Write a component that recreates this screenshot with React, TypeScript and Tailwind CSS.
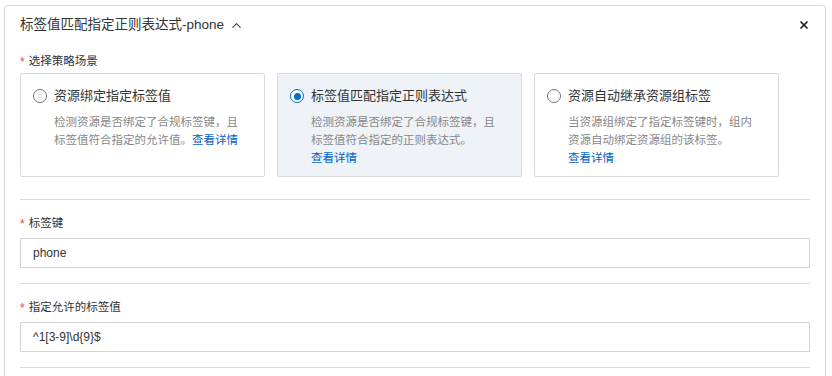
import { ChevronUp, X } from 'lucide-react';

const scenes = [
    {
        title: '资源绑定指定标签值',
        desc: '检测资源是否绑定了合规标签键，且标签值符合指定的允许值。',
        inline: true,
        selected: false,
    },
    {
        title: '标签值匹配指定正则表达式',
        desc: '检测资源是否绑定了合规标签键，且标签值符合指定的正则表达式。',
        inline: false,
        selected: true,
    },
    {
        title: '资源自动继承资源组标签',
        desc: '当资源组绑定了指定标签键时，组内资源自动绑定资源组的该标签。',
        inline: false,
        selected: false,
    },
];

function Label({ text }: { text: string }) {
    return (
        <div className="flex items-center h-4 text-[11.5px] text-[#333]">
            <span className="text-[#e5484d] mr-[4px] text-[12px]">*</span>
            {text}
        </div>
    );
}

export default function App() {
    return (
        <div className="w-[832px] h-[376px] bg-white overflow-hidden pt-[5px] pl-[4px] font-['Liberation_Sans','Noto_Sans_CJK_SC',sans-serif]">
            <div className="w-[822px] h-[400px] border border-[#d6d6d6] rounded-t-[4px] pl-[15px] pr-[15px]">
                {/* Header */}
                <div className="flex items-center justify-between h-[36px] pt-[2px]">
                    <div className="flex items-center gap-[5px] text-[13.5px] text-[#333]">
                        标签值匹配指定正则表达式-phone
                        <ChevronUp className="w-[15px] h-[15px] text-[#444]" strokeWidth={1.8} />
                    </div>
                    <X className="w-[12px] h-[12px] text-[#222]" strokeWidth={3.5} />
                </div>

                {/* Scene selection */}
                <div className="mt-[12px]">
                    <Label text="选择策略场景" />
                    <div className="flex gap-[12px] mt-[3px]">
                        {scenes.map((s) => (
                            <div
                                key={s.title}
                                className={`w-[245px] h-[104px] border rounded-[2px] pl-[12px] pr-[10px] pt-[12px] flex gap-[7px] ${
                                    s.selected ? 'bg-[#eff2f7] border-[#d6dae0]' : 'bg-white border-[#d9d9d9]'
                                }`}
                            >
                                <div className="pt-[3px]">
                                    {s.selected ? (
                                        <div className="w-[14px] h-[14px] rounded-full border-[1.5px] border-[#0070cc] flex items-center justify-center bg-white">
                                            <div className="w-[7px] h-[7px] rounded-full bg-[#0070cc]" />
                                        </div>
                                    ) : (
                                        <div className="w-[14px] h-[14px] rounded-full border-[1.5px] border-[#6b7380] bg-white" />
                                    )}
                                </div>
                                <div>
                                    <div className="text-[13px] text-[#333] leading-[20px]">{s.title}</div>
                                    <div className="text-[11.5px] text-[#888] leading-[18px] mt-[7px] w-[186px]">
                                        {s.desc}
                                        {s.inline && <span className="text-[#0064c8]">查看详情</span>}
                                    </div>
                                    {!s.inline && <div className="text-[11.5px] text-[#0064c8] leading-[18px]">查看详情</div>}
                                </div>
                            </div>
                        ))}
                    </div>
                </div>

                <div className="border-t border-[#d9d9d9] mt-[22px]" />

                {/* Tag key */}
                <div className="mt-[16px]">
                    <Label text="标签键" />
                    <div className="mt-[6px] h-[30px] border border-[#d4d4d4] flex items-center px-[12px] text-[12px] text-[#333]">
                        phone
                    </div>
                </div>

                <div className="border-t border-[#d9d9d9] mt-[15px]" />

                {/* Allowed value */}
                <div className="mt-[16px]">
                    <Label text="指定允许的标签值" />
                    <div className="mt-[6px] h-[30px] border border-[#d4d4d4] flex items-center px-[12px] text-[12px] text-[#333]">
                        ^1[3-9]\d{'{'}9{'}'}$
                    </div>
                </div>

                <div className="border-t border-[#d9d9d9] mt-[15px]" />
            </div>
        </div>
    );
}
